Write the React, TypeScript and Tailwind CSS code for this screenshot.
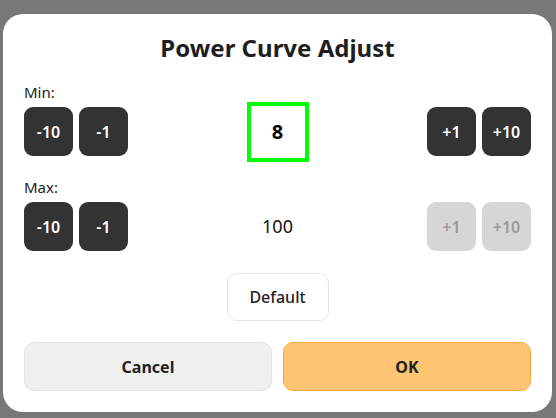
import React from 'react';

const font = { fontFamily: '"Noto Sans", Lato, sans-serif' };

function StepButton({ label, disabled = false }: { label: string; disabled?: boolean }) {
  return (
    <button
      className={`w-[49px] h-[49px] rounded-[9px] text-[16px] font-semibold flex items-center justify-center ${
        disabled ? 'bg-[#d6d6d6] text-[#9a9a9a]' : 'bg-[#333333] text-white'
      }`}
    >
      {label}
    </button>
  );
}

function AdjustRow({ label, value, highlight, maxed }: { label: string; value: number; highlight?: boolean; maxed?: boolean }) {
  return (
    <div>
      <div className="text-[15px] leading-[18px] text-[#222]">{label}</div>
      <div className="mt-[6px] flex items-center justify-between h-[49px]">
        <div className="flex gap-[6px]">
          <StepButton label="-10" />
          <StepButton label="-1" />
        </div>
        {highlight ? (
          <div className="w-[62px] h-[60px] border-[4px] border-[#00ff00] flex items-center justify-center text-[20px] font-bold text-black">
            {value}
          </div>
        ) : (
          <div className="w-[62px] h-[60px] flex items-center justify-center text-[18px] text-[#111]">{value}</div>
        )}
        <div className="flex gap-[6px]">
          <StepButton label="+1" disabled={maxed} />
          <StepButton label="+10" disabled={maxed} />
        </div>
      </div>
    </div>
  );
}

export default function App() {
  return (
    <div className="w-[556px] h-[418px] bg-[#787878] pl-[3px] pt-[14px]" style={font}>
      <div className="w-[549px] h-[398px] bg-white rounded-[20px] px-[21px] pt-[19px]">
        <h1 className="text-center text-[24px] leading-[30px] font-bold text-[#1e1e1e]">Power Curve Adjust</h1>

        <div className="mt-[20px] flex flex-col gap-[22px]">
          <AdjustRow label="Min:" value={8} highlight />
          <AdjustRow label="Max:" value={100} maxed />
        </div>

        <div className="mt-[22px] flex justify-center">
          <button className="w-[102px] h-[48px] rounded-[10px] border border-[#e4e4e4] bg-white text-[16px] font-medium text-[#222]">
            Default
          </button>
        </div>

        <div className="mt-[21px] flex gap-[11px]">
          <button className="flex-1 h-[49px] rounded-[10px] border border-[#e4e4e4] bg-[#efefef] text-[16px] font-bold text-[#222]">
            Cancel
          </button>
          <button className="flex-1 h-[49px] rounded-[10px] border border-[#f5a63c] bg-[#ffc572] text-[16px] font-bold text-[#222]">
            OK
          </button>
        </div>
      </div>
    </div>
  );
}
